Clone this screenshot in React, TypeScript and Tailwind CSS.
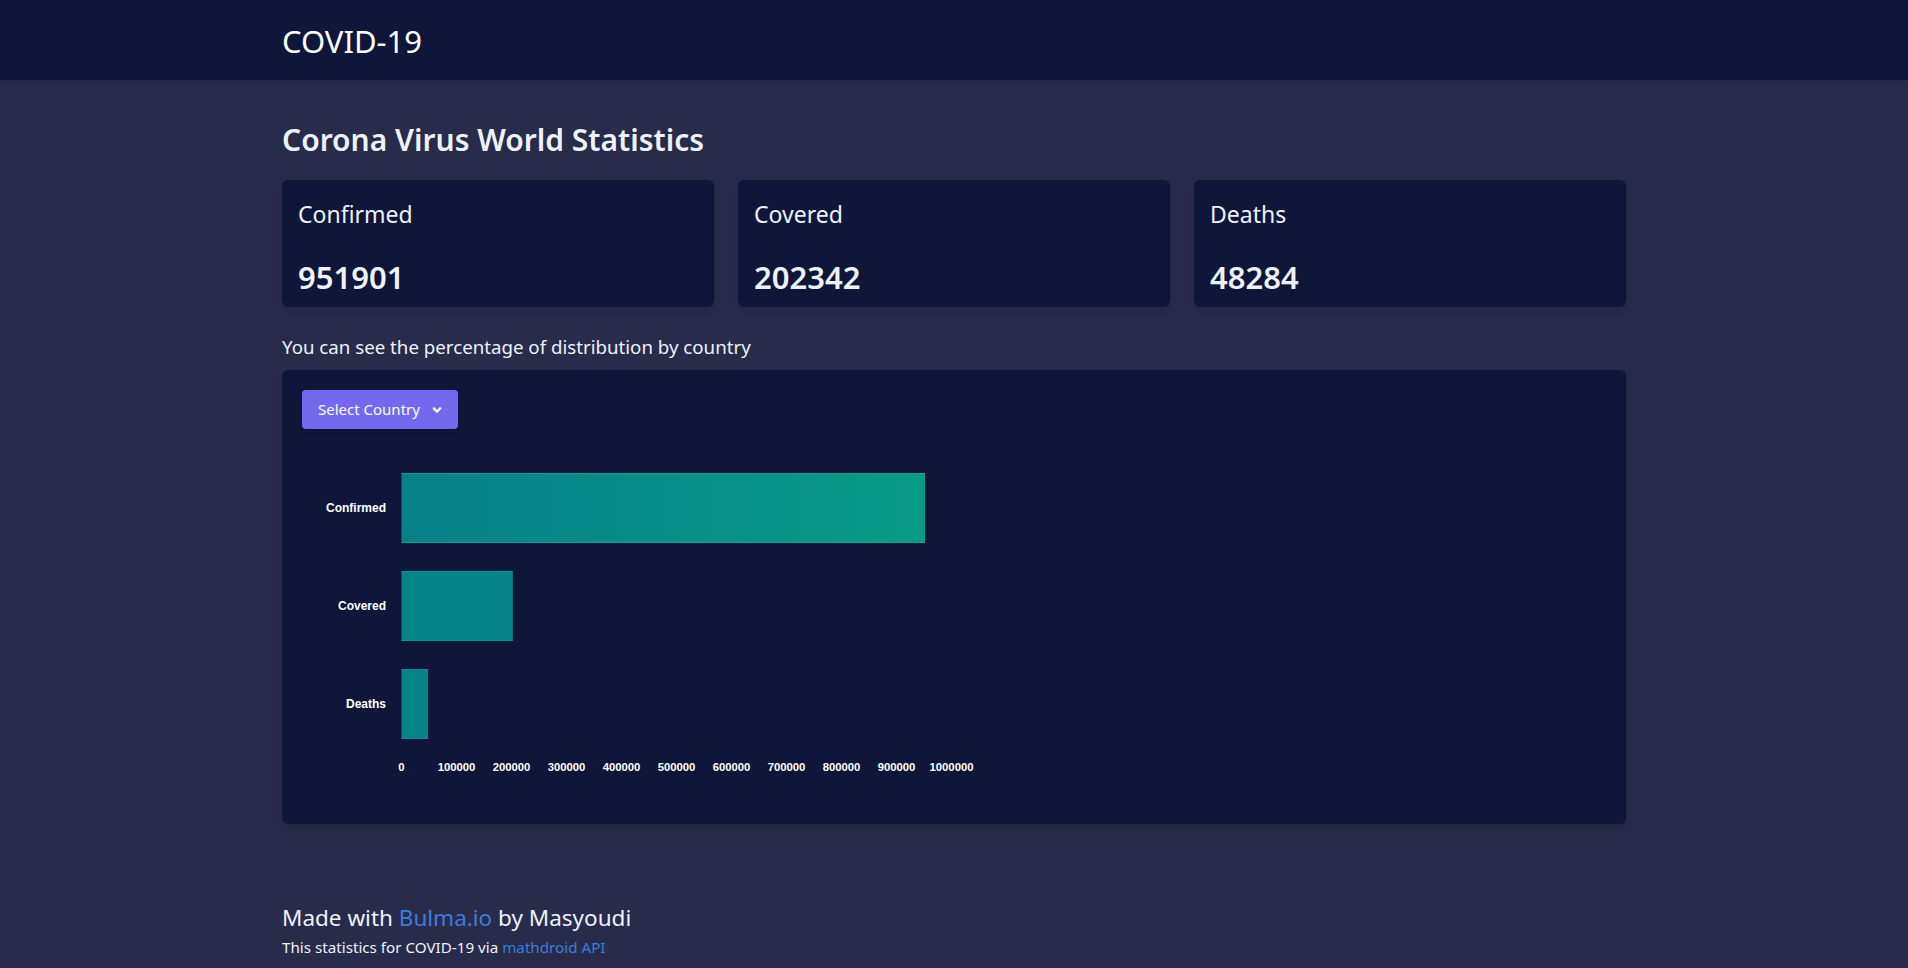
import { FaAngleDown } from "react-icons/fa";

const stats = [
  { label: "Confirmed", value: 951901 },
  { label: "Covered", value: 202342 },
  { label: "Deaths", value: 48284 },
];

const ticks = [0, 100000, 200000, 300000, 400000, 500000, 600000, 700000, 800000, 900000, 1000000];

// x axis: where zero sits and px per case
const X0 = 99.5;
const SCALE = 550 / 1000000;

function BarChart() {
  return (
    <svg width="720" height="350" className="mt-[21px] block" style={{ fontFamily: '"Liberation Sans", Arial, sans-serif' }}>
      <defs>
        <linearGradient id="confirmedFill" x1="0" x2="1" y1="0" y2="0">
          <stop offset="0%" stopColor="#07808a" />
          <stop offset="100%" stopColor="#079b86" />
        </linearGradient>
      </defs>
      {stats.map((s, i) => {
        const y = 23 + i * 98;
        const w = s.value * SCALE;
        return (
          <g key={s.label}>
            <text x={84} y={y + 39} textAnchor="end" fill="#ffffff" fontSize="12" fontWeight="bold">
              {s.label}
            </text>
            <rect x={X0} y={y} width={w} height={70} fill={i === 0 ? "url(#confirmedFill)" : "#07838a"} />
            <line x1={X0} x2={X0 + w} y1={y + 0.5} y2={y + 0.5} stroke={i === 0 ? "#0aa893" : "#0a9099"} />
            <line x1={X0} x2={X0 + w} y1={y + 69.5} y2={y + 69.5} stroke={i === 0 ? "#0aa893" : "#0a9099"} />
          </g>
        );
      })}
      {ticks.map((t) => (
        <text key={t} x={X0 + t * SCALE} y={321} textAnchor="middle" fill="#ffffff" fontSize="11.3" fontWeight="bold">
          {t}
        </text>
      ))}
    </svg>
  );
}

export default function App() {
  return (
    <div className="min-h-screen bg-[#282b4a] text-[#eef2fb]" style={{ fontFamily: '"Noto Sans", "Open Sans", sans-serif' }}>
      {/* Navbar */}
      <nav className="h-[80px] bg-[#10163a] shadow-[0_2px_4px_rgba(0,0,0,0.15)]">
        <div className="mx-auto flex h-full w-[1344px] items-center pt-[2px]">
          <span className="text-[31px] leading-none text-white">COVID-19</span>
        </div>
      </nav>

      <main className="mx-auto w-[1344px] pt-[42px]">
        <h1 className="text-[30px] font-semibold leading-[36px]">Corona Virus World Statistics</h1>

        <div className="mt-[22px] grid grid-cols-3 gap-6">
          {stats.map((s) => (
            <div key={s.label} className="h-[127px] rounded-md bg-[#10163a] px-4 pt-[19px] shadow-[0_4px_10px_rgba(0,0,0,0.12)]">
              <p className="text-[23px] leading-[30px]">{s.label}</p>
              <p className="mt-[29px] text-[31px] font-semibold leading-[38px]">{s.value}</p>
            </div>
          ))}
        </div>

        <p className="mt-[26px] text-[18.7px] leading-[28px]">You can see the percentage of distribution by country</p>

        <div className="mt-[9px] rounded-md bg-[#10163a] p-5 pb-[24px] shadow-[0_4px_10px_rgba(0,0,0,0.12)]">
          <button className="flex h-[39px] items-center gap-[10px] rounded-[4px] bg-[#7468ef] pl-4 pr-[14px] text-[15px] text-white shadow-[0_2px_3px_rgba(0,0,0,0.2)]">
            Select Country
            <FaAngleDown size={14} />
          </button>
          <BarChart />
        </div>

        {/* Footer */}
        <footer className="mt-[79px] pb-2">
          <p className="text-[22.5px] leading-[30px]">
            Made with <a className="text-[#3b7ddd]">Bulma.io</a> by Masyoudi
          </p>
          <p className="mt-[2px] text-[15.2px] leading-[24px]">
            This statistics for COVID-19 via <a className="text-[#3b7ddd]">mathdroid API</a>
          </p>
        </footer>
      </main>
    </div>
  );
}
